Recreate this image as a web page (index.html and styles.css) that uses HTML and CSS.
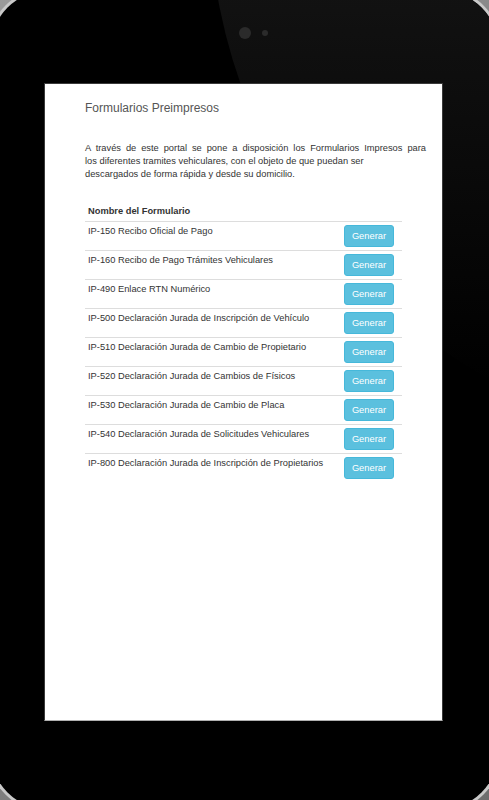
FILE: index.html
```html
<!doctype html>
<html>
  <head>
    <meta charset="utf-8">
    <title>Formularios Preimpresos</title>
    <link rel="stylesheet" href="styles.css">
</head>
<body>

<div id="tablet">
  <div class="glare"></div>
  <div class="camera">
    <span class="lens"></span>
    <span class="sensor"></span>
  </div>

  <div id="screen">
    <h4 class="pageTitle">Formularios Preimpresos</h4>
    <p class="intro"><span class="introFirst">A través de este portal se pone a disposición los Formularios Impresos para</span>los diferentes tramites vehiculares, con el objeto de que puedan ser<br>descargados de forma rápida y desde su domicilio.</p>

    <table class="forms">
      <thead>
        <tr>
          <th>Nombre del Formulario</th>
          <th></th>
        </tr>
      </thead>
      <tbody>
        <tr>
          <td>IP-150 Recibo Oficial de Pago</td>
          <td class="action"><button class="btnInfo">Generar</button></td>
        </tr>
        <tr>
          <td>IP-160 Recibo de Pago Trámites Vehiculares</td>
          <td class="action"><button class="btnInfo">Generar</button></td>
        </tr>
        <tr>
          <td>IP-490 Enlace RTN Numérico</td>
          <td class="action"><button class="btnInfo">Generar</button></td>
        </tr>
        <tr>
          <td>IP-500 Declaración Jurada de Inscripción de Vehículo</td>
          <td class="action"><button class="btnInfo">Generar</button></td>
        </tr>
        <tr>
          <td>IP-510 Declaración Jurada de Cambio de Propietario</td>
          <td class="action"><button class="btnInfo">Generar</button></td>
        </tr>
        <tr>
          <td>IP-520 Declaración Jurada de Cambios de Físicos</td>
          <td class="action"><button class="btnInfo">Generar</button></td>
        </tr>
        <tr>
          <td>IP-530 Declaración Jurada de Cambio de Placa</td>
          <td class="action"><button class="btnInfo">Generar</button></td>
        </tr>
        <tr>
          <td>IP-540 Declaración Jurada de Solicitudes Vehiculares</td>
          <td class="action"><button class="btnInfo">Generar</button></td>
        </tr>
        <tr>
          <td>IP-800 Declaración Jurada de Inscripción de Propietarios</td>
          <td class="action"><button class="btnInfo">Generar</button></td>
        </tr>
      </tbody>
    </table>
  </div>
</div>

  </body>
</html>
```

FILE: styles.css
```css
*{
  box-sizing: border-box;
}
html, body{
  height: 800px;
  overflow: hidden;
}
body{
  margin: 0;
  padding: 0;
  background: linear-gradient(135deg, #9a9a9a, #6e6e6e);
  font-family: "Liberation Sans", Arial, sans-serif;
}
#tablet{
  position: relative;
  width: 509px;
  height: 820px;
  margin: -10px;
  padding: 93px 0 0 54px;
  background-color: #000;
  border-radius: 60px;
  box-shadow: 0 0 0 3px #c9c9c9;
  overflow: hidden;
}
.glare{
  position: absolute;
  left: 219px;
  top: -640px;
  width: 1100px;
  height: 1100px;
  border-radius: 50%;
  background: linear-gradient(#121212 58%, #000 94%);
}
.camera{
  position: absolute;
  left: 249px;
  top: 37px;
  display: flex;
  align-items: center;
  gap: 11px;
}
.lens{
  width: 12px;
  height: 12px;
  border-radius: 50%;
  background-color: #2b2b2b;
}
.sensor{
  width: 6px;
  height: 6px;
  border-radius: 50%;
  background-color: #2b2b2b;
}
#screen{
  position: relative;
  width: 399px;
  height: 638px;
  background-color: #fff;
  border: 1px solid #3a3a3a;
  border-bottom-color: #b0b0b0;
  padding: 18px 0 0 40px;
  color: #333;
}
.pageTitle{
  margin: 0;
  font-size: 12px;
  line-height: 13px;
  font-weight: normal;
  color: #555;
}
.intro{
  margin: 27px 0 0 0;
  font-size: 9.3px;
  line-height: 13px;
  white-space: nowrap;
}
.introFirst{
  display: block;
  width: 341px;
  text-align: justify;
  text-align-last: justify;
}
.forms{
  width: 317px;
  margin-top: 21px;
  border-collapse: collapse;
  border-spacing: 0;
  font-size: 9.3px;
  line-height: 13px;
}
.forms th{
  text-align: left;
  font-weight: bold;
  padding: 3px;
  border-bottom: 1px solid #ddd;
}
.forms td{
  vertical-align: top;
  padding: 3px;
  border-top: 1px solid #ddd;
}
.forms tbody tr:first-child td{
  border-top: 0;
}
.forms td.action{
  text-align: right;
  padding-right: 8px;
}
.btnInfo{
  display: inline-block;
  height: 22px;
  padding: 0 7px;
  font-family: "Liberation Sans", Arial, sans-serif;
  font-size: 9.3px;
  line-height: 20px;
  color: #fff;
  background-color: #5bc0de;
  border: 1px solid #46b8da;
  border-radius: 3px;
}
```
